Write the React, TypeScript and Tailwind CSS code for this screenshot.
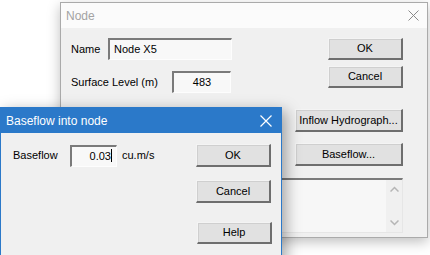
import React from 'react';

const font = "font-['Liberation_Sans',Arial,sans-serif]";

const WinButton: React.FC<{ label: string; className?: string }> = ({ label, className = '' }) => (
  <button
    className={`h-[22px] bg-[#e1e1e1] border-t border-l border-[#f4f4f4] border-b-2 border-r-2 border-b-[#6e6e6e] border-r-[#6e6e6e] shadow-[inset_1px_1px_0_#cfcfcf] text-[11px] text-black flex items-center justify-center ${className}`}
  >
    {label}
  </button>
);

const Field: React.FC<{ value: string; className?: string; align?: string; caret?: boolean }> = ({ value, className = '', align = 'text-left', caret }) => (
  <div
    className={`h-[22px] bg-[#f8f8f8] border-t-2 border-l-2 border-[#7a7a7a] border-b border-r border-b-[#fdfdfd] border-r-[#fdfdfd] text-[11px] text-black flex items-center px-[4px] ${align} ${className}`}
  >
    <span className="w-full">
      {value}
      {caret && <span className="inline-block w-px h-[13px] bg-black align-middle -mt-[2px]" />}
    </span>
  </div>
);

const App: React.FC = () => {
  return (
    <div className={`relative w-[430px] h-[255px] bg-white overflow-hidden ${font}`}>
      {/* Node dialog (inactive, behind) */}
      <div className="absolute left-[60px] top-[2px] w-[368px] h-[236px] border border-[#aaaaaa] bg-[#f0f0f0] shadow-[0_4px_12px_rgba(0,0,0,0.25)] flex flex-col">
        <div className="h-[25px] bg-[#fbfbfb] flex items-center justify-between pl-[5px] pr-[8px]">
          <span className="text-[12px] text-[#a3a3a3]">Node</span>
          <svg width="11" height="11" viewBox="0 0 11 11">
            <path d="M0.5 0.5 L10.5 10.5 M10.5 0.5 L0.5 10.5" stroke="#8a8a8a" strokeWidth="1" />
          </svg>
        </div>
        <div className="flex-1 pl-[10px] pr-[24px] pt-[10px]">
          <div className="flex justify-between">
            <div className="flex flex-col gap-[11px]">
              <div className="flex items-center">
                <span className="text-[11px] w-[37px]">Name</span>
                <Field value="Node X5" className="w-[124px]" />
              </div>
              <div className="flex items-center">
                <span className="text-[11px] w-[101px]">Surface Level (m)</span>
                <Field value="483" className="w-[59px]" align="text-center" />
              </div>
            </div>
            <div className="flex flex-col gap-[6px]">
              <WinButton label="OK" className="w-[75px]" />
              <WinButton label="Cancel" className="w-[75px]" />
            </div>
          </div>
          <div className="flex flex-col items-end gap-[11px] mt-[16px]">
            <WinButton label="Inflow Hydrograph..." className="w-[108px] h-[23px]" />
            <WinButton label="Baseflow..." className="w-[108px] h-[23px]" />
          </div>
          <div className="mt-[12px] ml-[10px] h-[55px] border-t-2 border-l-2 border-[#7a7a7a] border-b border-r border-b-[#e6e6e6] border-r-[#e6e6e6] bg-[#f7f7f7] flex justify-end">
            <div className="w-[16px] bg-[#f0f0f0] flex flex-col items-center justify-between py-[6px]">
              <svg width="9" height="6" viewBox="0 0 9 6">
                <path d="M0.5 5.5 L4.5 1.5 L8.5 5.5" stroke="#b5b5b5" strokeWidth="1.5" fill="none" />
              </svg>
              <svg width="9" height="6" viewBox="0 0 9 6">
                <path d="M0.5 0.5 L4.5 4.5 L8.5 0.5" stroke="#b5b5b5" strokeWidth="1.5" fill="none" />
              </svg>
            </div>
          </div>
        </div>
      </div>

      {/* Baseflow dialog (active, front) */}
      <div className="absolute left-0 top-[107px] w-[282px] h-[160px] border border-[#2b79c9] bg-[#f0f0f0] shadow-[4px_4px_14px_rgba(0,0,0,0.35)] flex flex-col">
        <div className="h-[25px] bg-[#2b79c9] flex items-center justify-between pl-[5px] pr-[9px]">
          <span className="text-[12px] text-white">Baseflow into node</span>
          <svg width="12" height="12" viewBox="0 0 12 12">
            <path d="M0.5 0.5 L11.5 11.5 M11.5 0.5 L0.5 11.5" stroke="#ffffff" strokeWidth="1.2" />
          </svg>
        </div>
        <div className="flex justify-between pl-[12px] pr-[9px] pt-[11px]">
          <div className="flex items-center h-[23px]">
            <span className="text-[11px] w-[57px]">Baseflow</span>
            <Field value="0.03" className="w-[47px]" align="text-right" caret />
            <span className="text-[11px] ml-[5px]">cu.m/s</span>
          </div>
          <div className="flex flex-col">
            <WinButton label="OK" className="w-[75px] h-[23px]" />
            <WinButton label="Cancel" className="w-[75px] h-[23px] mt-[13px]" />
            <WinButton label="Help" className="w-[75px] h-[22px] mt-[19px] ml-[1px]" />
          </div>
        </div>
      </div>
    </div>
  );
};

export default App;
